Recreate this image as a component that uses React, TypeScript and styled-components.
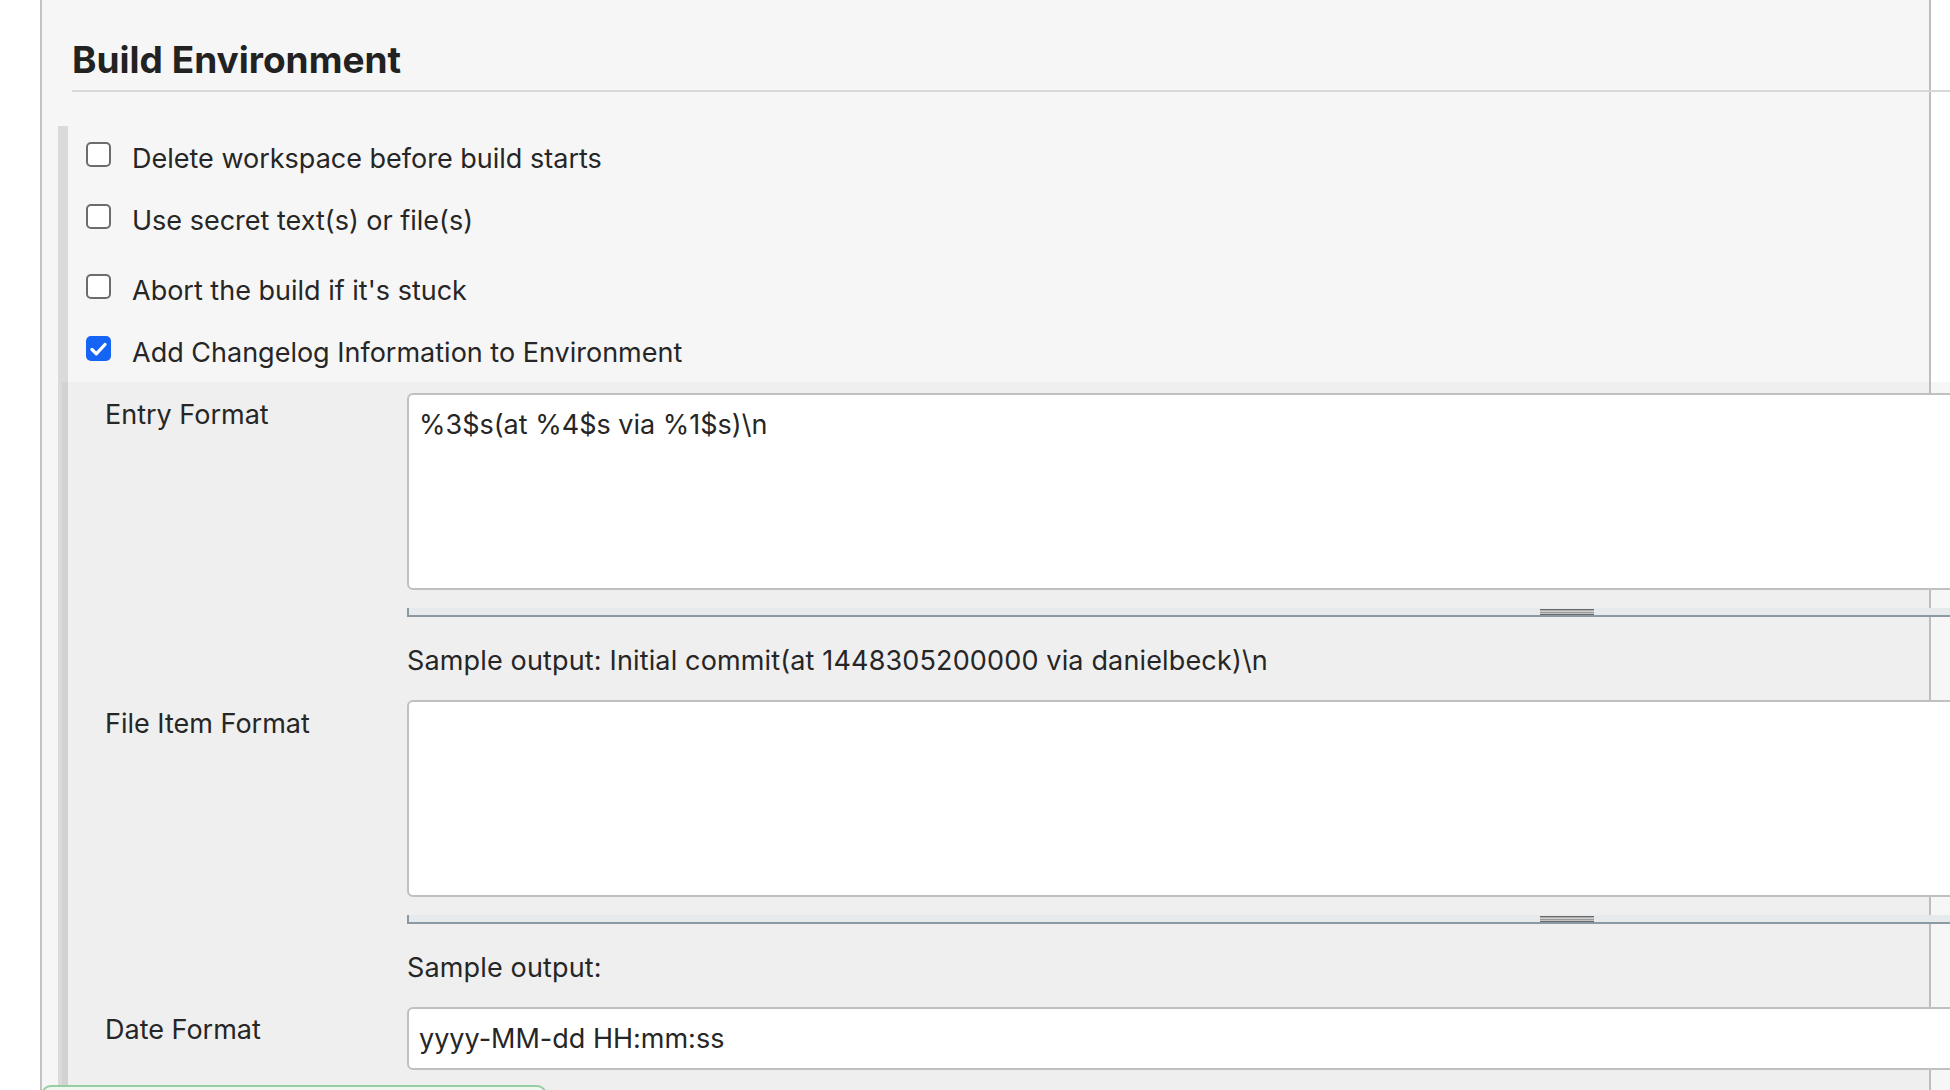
import React from "react";
import styled, { createGlobalStyle } from "styled-components";

const Global = createGlobalStyle`
  html, body { margin: 0; padding: 0; background: #ffffff; }
  body { overflow: hidden; font-family: Inter, "Noto Sans", "Liberation Sans", sans-serif; color: #262626; }
  * { box-sizing: border-box; }
`;

const Panel = styled.div`
  margin-left: 40px;
  width: 1891px;
  height: 1090px;
  background: #f6f6f6;
  border-left: 2px solid #c3c3c3;
  border-right: 2px solid #bdbdbd;
  padding: 37px 0 0 16px;
`;

const Header = styled.div`
  margin-left: 14px;
  width: 1878px;
  padding-bottom: 7px;
  border-bottom: 2px solid #d8d8d8;
`;

const Title = styled.h2`
  margin: 0;
  font-size: 37px;
  line-height: 46px;
  font-weight: 700;
  color: #222222;
`;

const Section = styled.div`
  margin-top: 34px;
  border-left: 10px solid #dadada;
  padding-top: 15px;
`;

const CheckRow = styled.label<{ $after: number }>`
  display: flex;
  align-items: flex-start;
  padding-left: 18px;
  margin-bottom: ${(p) => p.$after}px;
  font-size: 27px;
  line-height: 36px;
`;

const Box = styled.span<{ $on?: boolean }>`
  flex: none;
  width: 25px;
  height: 25px;
  margin-top: 1px;
  margin-right: 21px;
  border-radius: 5px;
  display: flex;
  align-items: center;
  justify-content: center;
  background: ${(p) => (p.$on ? "#1464f6" : "#ffffff")};
  border: ${(p) => (p.$on ? "none" : "2px solid #6c6c6c")};
`;

const Nested = styled.div`
  margin-left: -6px;
  border-left: 6px solid #d2d2d2;
  background: #efefef;
  padding: 11px 0 0 37px;
  height: 760px;
  box-shadow: 2px 0 0 #bdbdbd, 21px 0 0 #f6f6f6;
`;

const FieldRow = styled.div<{ $after: number }>`
  display: grid;
  grid-template-columns: 302px 1700px;
  margin-bottom: ${(p) => p.$after}px;
`;

const Label = styled.div<{ $pt: number }>`
  padding-top: ${(p) => p.$pt}px;
  font-size: 27px;
  line-height: 36px;
`;

const Field = styled.div`
  display: flex;
  flex-direction: column;
`;

const Area = styled.textarea`
  display: block;
  width: 100%;
  height: 197px;
  resize: none;
  border: 2px solid #c0c0c0;
  border-radius: 6px;
  background: #ffffff;
  padding: 12px 10px 10px;
  font-family: Inter, "Noto Sans", "Liberation Sans", sans-serif;
  font-size: 27px;
  line-height: 36px;
  color: #262626;
  outline: none;
`;

const ResizeBar = styled.div`
  margin-top: 18px;
  height: 9px;
  background: #e6eaed;
  border-left: 2px solid #8a99a2;
  border-bottom: 2px solid #8a99a2;
  display: flex;
  align-items: flex-start;
`;

const Grip = styled.span`
  margin-left: 1131px;
  margin-top: 1px;
  width: 54px;
  height: 6px;
  background: linear-gradient(
    to bottom,
    #6a6a6a 0 1px,
    #b0b0b0 1px 2px,
    #d0d0d0 2px 3px,
    #9a9a9a 3px 4px,
    #c4c4c4 4px 5px,
    #6a6a6a 5px 6px
  );
`;

const Sample = styled.div`
  margin-top: 26px;
  font-size: 27px;
  line-height: 36px;
  letter-spacing: 0.15px;
`;

const Input = styled.input`
  display: block;
  width: 100%;
  height: 63px;
  border: 2px solid #c0c0c0;
  border-radius: 6px;
  background: #ffffff;
  padding: 0 10px;
  font-family: Inter, "Noto Sans", "Liberation Sans", sans-serif;
  font-size: 27px;
  line-height: 36px;
  color: #262626;
  outline: none;
`;

const Footer = styled.div`
  position: fixed;
  left: 41px;
  top: 1085px;
  width: 506px;
  height: 40px;
  background: #eef7f0;
  border: 2px solid #97cda4;
  border-radius: 10px;
`;

const Check = () => (
  <svg width="17" height="14" viewBox="0 0 17 14" aria-hidden="true">
    <path d="M2 7.5 L6.3 11.8 L15 2.5" fill="none" stroke="#ffffff" strokeWidth="3.2" strokeLinecap="round" strokeLinejoin="round" />
  </svg>
);

const options: { text: string; on?: boolean; after: number }[] = [
  { text: "Delete workspace before build starts", after: 26 },
  { text: "Use secret text(s) or file(s)", after: 34 },
  { text: "Abort the build if it's stuck", after: 26 },
  { text: "Add Changelog Information to Environment", on: true, after: 11 },
];

export default function App() {
  return (
    <>
      <Global />
      <Panel>
        <Header>
          <Title>Build Environment</Title>
        </Header>
        <Section>
          {options.map((o) => (
            <CheckRow key={o.text} $after={o.after}>
              <Box $on={o.on}>{o.on ? <Check /> : null}</Box>
              <span>{o.text}</span>
            </CheckRow>
          ))}
          <Nested>
            <FieldRow $after={21}>
              <Label $pt={4}>Entry Format</Label>
              <Field>
                <Area defaultValue={"%3$s(at %4$s via %1$s)\\n"} />
                <ResizeBar>
                  <Grip />
                </ResizeBar>
                <Sample>Sample output: Initial commit(at 1448305200000 via danielbeck)\n</Sample>
              </Field>
            </FieldRow>
            <FieldRow $after={21}>
              <Label $pt={6}>File Item Format</Label>
              <Field>
                <Area defaultValue="" />
                <ResizeBar>
                  <Grip />
                </ResizeBar>
                <Sample>Sample output:</Sample>
              </Field>
            </FieldRow>
            <FieldRow $after={0}>
              <Label $pt={5}>Date Format</Label>
              <Field>
                <Input defaultValue="yyyy-MM-dd HH:mm:ss" />
              </Field>
            </FieldRow>
          </Nested>
        </Section>
      </Panel>
      <Footer />
    </>
  );
}
